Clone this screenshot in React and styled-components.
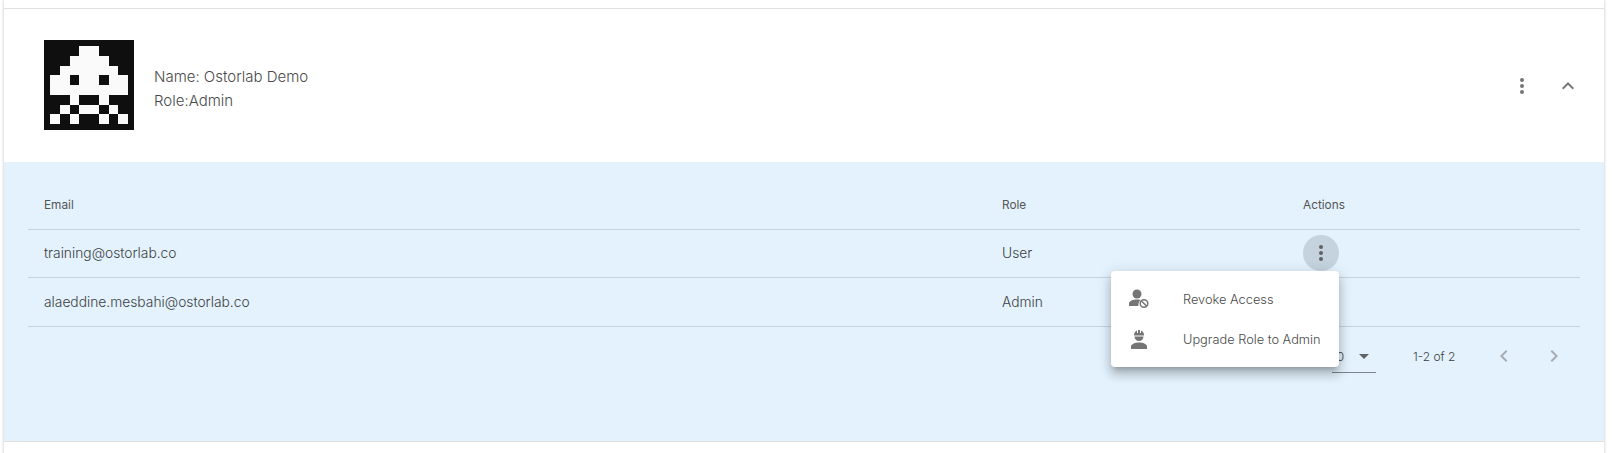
import React from "react";
import styled, { createGlobalStyle } from "styled-components";

const GlobalStyle = createGlobalStyle`
  html, body {
    margin: 0;
    padding: 0;
    background: #fff;
    height: 453px;
    overflow: hidden;
  }
  body {
    font-family: "Inter", "Liberation Sans", sans-serif;
    font-weight: 300;
  }
`;

const Page = styled.div`
  width: 1600px;
  margin-left: 4px;
  padding-top: 8px;
  box-shadow: 0 0 3px rgba(0, 0, 0, 0.25);
  height: 453px;
  background: #fff;
`;

const Header = styled.div`
  display: flex;
  align-items: center;
  height: 153px;
  padding: 0 12px 0 40px;
  border-top: 1px solid #e0e0e0;
`;

const Avatar = styled.svg`
  width: 90px;
  height: 90px;
  display: block;
  margin-right: 20px;
  margin-bottom: 2px;
`;

const Info = styled.div`
  flex: 1;
  margin-top: 6px;
  font-size: 15px;
  line-height: 24px;
  color: #4a4a4a;
`;

const IconButton = styled.button`
  width: ${(p) => p.$size}px;
  height: 48px;
  padding: 0;
  border: 0;
  background: transparent;
  color: #757575;
  display: flex;
  align-items: center;
  justify-content: center;
`;

const Details = styled.div`
  height: 280px;
  box-sizing: border-box;
  padding: 16px 24px 0;
  background: #e3f2fd;
  border-bottom: 1px solid #e0e0e0;
`;

const Row = styled.div`
  display: grid;
  grid-template-columns: 958px 301px 1fr;
  align-items: center;
  height: ${(p) => p.$height}px;
  box-sizing: border-box;
  padding: ${(p) => (p.$head ? "2px 0 0 16px" : "0 0 1px 16px")};
  border-bottom: 1px solid #c5d3df;
  font-size: ${(p) => (p.$head ? 11.8 : 13.8)}px;
  font-weight: ${(p) => (p.$head ? 400 : 300)};
  color: ${(p) => (p.$head ? "#555" : "#3c3f41")};
`;

const Actions = styled.div`
  position: relative;
  height: 36px;
`;

const RowButton = styled.div`
  width: 36px;
  height: 36px;
  border-radius: 50%;
  background: #c5d3df;
  color: #616161;
  display: flex;
  align-items: center;
  justify-content: center;
`;

const Menu = styled.div`
  position: absolute;
  top: 36px;
  left: -192px;
  z-index: 2;
  width: 228px;
  box-sizing: border-box;
  padding: 8px 0;
  background: #fff;
  border-radius: 4px;
  box-shadow: 0 5px 5px -3px rgba(0, 0, 0, 0.2), 0 8px 10px 1px rgba(0, 0, 0, 0.14),
    0 3px 14px 2px rgba(0, 0, 0, 0.12);
`;

const MenuItem = styled.div`
  display: flex;
  align-items: center;
  height: 40px;
  font-size: 12.8px;
  color: #4a4a4a;
  white-space: nowrap;
`;

const MenuIcon = styled.svg`
  width: 24px;
  height: 24px;
  margin-left: 16px;
  margin-right: 32px;
  flex: none;
`;

const Pagination = styled.div`
  display: flex;
  justify-content: flex-end;
  align-items: center;
  height: 58px;
  font-size: 12px;
  color: #3c3f41;
`;

const Select = styled.div`
  width: 44px;
  height: 32px;
  box-sizing: border-box;
  border-bottom: 1px solid #7b858c;
  display: flex;
  align-items: center;
  justify-content: space-between;
  padding: 0 7px 0 0;
  margin-right: 37px;
  margin-top: 1px;
`;

const Caret = styled.span`
  width: 0;
  height: 0;
  border-left: 5px solid transparent;
  border-right: 5px solid transparent;
  border-top: 5px solid #5f6368;
`;

const Range = styled.span`
  width: 41px;
  white-space: nowrap;
  margin-right: 38px;
`;

const PageButton = styled.div`
  width: 24px;
  display: flex;
  justify-content: center;
  color: #a5adb3;
  margin-left: ${(p) => (p.$next ? 26 : 0)}px;
  margin-right: ${(p) => (p.$next ? 14 : 0)}px;
`;

const Footer = styled.div`
  height: 12px;
  background: #fff;
`;

const invader = [
  "...XX...",
  "..XXXX..",
  ".XXXXXX.",
  "XX.XX.XX",
  "XXXXXXXX",
  "..X..X..",
  ".X.XX.X.",
  "X.X..X.X",
];

const InvaderAvatar = () => (
  <Avatar viewBox="0 0 90 90" shapeRendering="crispEdges">
    <rect width="90" height="90" fill="#0f0f0f" />
    {invader.map((line, y) =>
      line.split("").map((c, x) =>
        c === "X" ? (
          <rect key={`${x}-${y}`} x={6 + x * 9.75} y={6 + y * 9.75} width="9.75" height="9.75" fill="#fafafa" />
        ) : null
      )
    )}
  </Avatar>
);

const Kebab = () => (
  <svg width="24" height="24" viewBox="0 0 24 24" fill="currentColor">
    <circle cx="12" cy="6" r="2" />
    <circle cx="12" cy="12" r="2" />
    <circle cx="12" cy="18" r="2" />
  </svg>
);

const Chevron = ({ d, size = 24 }) => (
  <svg width={size} height={size} viewBox="0 0 24 24" fill="currentColor">
    <path d={d} />
  </svg>
);

const App = () => (
  <>
    <GlobalStyle />
    <Page>
      <Header>
        <InvaderAvatar />
        <Info>
          <div>Name: Ostorlab Demo</div>
          <div>Role:Admin</div>
        </Info>
        <IconButton $size={44}>
          <Kebab />
        </IconButton>
        <IconButton $size={48}>
          <Chevron d="M7.41 15.41 12 10.83l4.59 4.58L18 14l-6-6-6 6z" />
        </IconButton>
      </Header>
      <Details>
        <Row $head $height={52}>
          <span>Email</span>
          <span>Role</span>
          <span>Actions</span>
        </Row>
        <Row $height={48}>
          <span>training@ostorlab.co</span>
          <span>User</span>
          <Actions>
            <RowButton>
              <Kebab />
            </RowButton>
            <Menu>
              <MenuItem>
                <MenuIcon viewBox="0 0 24 24" fill="#757575">
                  <circle cx="10" cy="7" r="4.5" />
                  <path d="M2 19v-2.500C2 14 6 12.500 10 12.500c1.200 0 2.400.1 3.500.4-1.500 1.400-2.300 3.500-2.100 6.100z" />
                  <circle cx="17" cy="16.500" r="3.800" fill="none" stroke="#757575" strokeWidth="1.500" />
                  <path d="M14.500 14l5 5" stroke="#757575" strokeWidth="1.500" />
                </MenuIcon>
                Revoke Access
              </MenuItem>
              <MenuItem>
                <MenuIcon viewBox="0 0 24 24" fill="#757575">
                  <path d="M4 22v-2.500C4 17 8.500 15.500 12 15.500s8 1.500 8 4V22z" />
                  <path d="M7.500 9.500a4.500 4.500 0 0 0 9 0z" />
                  <path d="M7 8.500h10V8c0-2.200-1.200-3.900-3-4.600V6h-1V3h-2v3h-1V3.400C8.200 4.100 7 5.800 7 8z" />
                </MenuIcon>
                Upgrade Role to Admin
              </MenuItem>
            </Menu>
          </Actions>
        </Row>
        <Row $height={49}>
          <span>alaeddine.mesbahi@ostorlab.co</span>
          <span>Admin</span>
          <span />
        </Row>
        <Pagination>
          <Select>
            <span>10</span>
            <Caret />
          </Select>
          <Range>1-2 of 2</Range>
          <PageButton>
            <Chevron d="M15.41 7.41 14 6l-6 6 6 6 1.41-1.41L10.83 12z" />
          </PageButton>
          <PageButton $next>
            <Chevron d="M10 6 8.590 7.410 13.170 12l-4.580 4.590L10 18l6-6z" />
          </PageButton>
        </Pagination>
      </Details>
      <Footer />
    </Page>
  </>
);

export default App;
